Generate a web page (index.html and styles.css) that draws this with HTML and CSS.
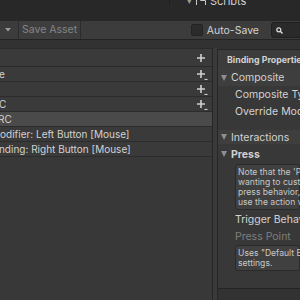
FILE: index.html
```html
<!DOCTYPE html>
<html lang="en">
  <head>
    <meta charset="UTF-8" />
    <title>Input Actions</title>
    <link rel="stylesheet" href="styles.css">
  </head>
  <body>
    <div class="tabstrip">
      <div class="project-row">
        <span class="tree-arrow">&#9662;</span>
        <svg class="folder" width="10" height="9" viewBox="0 0 10 9"><path d="M0.5 1.5h3l1 1h5v6h-9z" fill="none" stroke="#c8c8c8"/></svg>
        <span>Scripts</span>
      </div>
    </div>

    <div class="toolbar">
      <div class="menu-btn">
        <svg width="6" height="4" viewBox="0 0 6 4"><path d="M0 0h6l-3 3.5z" fill="#9a9a9a"/></svg>
      </div>
      <div class="save-btn">Save Asset</div>
      <div class="spacer"></div>
      <label class="autosave"><span class="check"></span>Auto-Save</label>
      <div class="search">
        <svg width="7" height="7" viewBox="0 0 7 7"><circle cx="2.8" cy="2.8" r="2" fill="none" stroke="#e0e0e0" stroke-width="1.2"/><path d="M4.3 4.3l2.2 2.2" stroke="#e0e0e0" stroke-width="1.4"/></svg>
      </div>
    </div>

    <div class="main">
      <div class="actions">
        <div class="col-header">
          <svg class="plus" width="11" height="10" viewBox="0 0 11 10"><path d="M4 0v8M0 4h8" stroke="#d0d0d0" stroke-width="1.6"/></svg>
        </div>
        <div class="row"><span class="label" style="margin-left: -1px">e</span>
          <svg class="plus" width="11" height="10" viewBox="0 0 11 10"><path d="M4 0v8M0 4h8" stroke="#d0d0d0" stroke-width="1.6"/><path d="M7.5 9.5h3" stroke="#d0d0d0" stroke-width="1.2"/></svg>
        </div>
        <div class="row"><span class="label"></span>
          <svg class="plus" width="11" height="10" viewBox="0 0 11 10"><path d="M4 0v8M0 4h8" stroke="#d0d0d0" stroke-width="1.6"/><path d="M7.5 9.5h3" stroke="#d0d0d0" stroke-width="1.2"/></svg>
        </div>
        <div class="row"><span class="label" style="margin-left: -1px">C</span>
          <svg class="plus" width="11" height="10" viewBox="0 0 11 10"><path d="M4 0v8M0 4h8" stroke="#d0d0d0" stroke-width="1.6"/><path d="M7.5 9.5h3" stroke="#d0d0d0" stroke-width="1.2"/></svg>
        </div>
        <div class="row selected"><span class="label" style="margin-left: -2px">RC</span></div>
        <div class="row"><span class="label" style="margin-left: -9px">Modifier: Left Button [Mouse]</span></div>
        <div class="row"><span class="label" style="margin-left: -10px">Binding: Right Button [Mouse]</span></div>
      </div>

      <div class="gutter"></div>

      <div class="props">
        <div class="props-header">Binding Properties</div>
        <div class="foldout-band"><span class="tri"></span>Composite</div>
        <div class="field">Composite Type</div>
        <div class="field">Override Modifiers Need To Be Pressed First</div>
        <div class="foldout-band interactions"><span class="tri"></span>Interactions</div>
        <div class="foldout bold"><span class="tri"></span>Press</div>
        <div class="helpbox">
          Note that the 'Press' interaction is only necessary when<br>
          wanting to customize button press behavior. For default<br>
          press behavior, simply set the action type to 'Button' and<br>
          use the action without interactions added to it.
        </div>
        <div class="field trigger">Trigger Behavior</div>
        <div class="field disabled">Press Point</div>
        <div class="helpbox">
          Uses "Default Button Press Point" set in project-wide input<br>
          settings.
        </div>
        <div class="props-footer"></div>
      </div>
    </div>
  </body>
</html>
```

FILE: styles.css
```css
body {
  margin: 0;
  width: 300px;
  height: 300px;
  overflow: hidden;
  background-color: #383838;
  font-family: Inter, "Noto Sans", sans-serif;
  font-size: 10px;
  color: #d2d2d2;
}
.tabstrip {
  height: 21px;
  background-color: #282828;
}
.project-row {
  margin-left: 169px;
  height: 5px;
  overflow: hidden;
  border-left: 1px solid #1e1e1e;
  display: flex;
  align-items: flex-end;
  gap: 4px;
  padding-left: 17px;
  line-height: 12px;
  font-size: 11px;
}
.project-row > * {
  margin-bottom: -2px;
}
.tree-arrow {
  color: #9a9a9a;
  font-size: 9px;
}
.toolbar {
  height: 18px;
  background-color: #3c3c3c;
  border-bottom: 1px solid #232323;
  display: flex;
  align-items: center;
}
.menu-btn {
  width: 19px;
  height: 18px;
  border-right: 1px solid #2c2c2c;
  display: flex;
  align-items: center;
  padding-left: 5px;
  box-sizing: border-box;
}
.save-btn {
  width: 62px;
  height: 18px;
  line-height: 18px;
  padding-left: 3px;
  box-sizing: border-box;
  background-color: #3e3e3e;
  border-right: 1px solid #2c2c2c;
  color: #858585;
  font-size: 10.5px;
}
.spacer {
  flex: 1;
}
.autosave {
  display: flex;
  align-items: center;
  gap: 4px;
  margin-right: 12px;
  font-size: 10.5px;
}
.check {
  width: 10px;
  height: 10px;
  background-color: #2b2b2b;
  border: 1px solid #232323;
  border-radius: 2px;
}
.search {
  width: 34px;
  height: 14px;
  margin-right: -11px;
  background-color: #2a2a2a;
  border: 1px solid #1f1f1f;
  border-radius: 3px;
  display: flex;
  align-items: center;
  padding-left: 4px;
}
.main {
  display: flex;
  height: 260px;
  background-color: #323232;
}
.actions {
  width: 212px;
  margin-top: 8px;
  border-right: 1px solid #262626;
  background-color: #383838;
  overflow: hidden;
}
.col-header {
  height: 17px;
  border-top: 1px solid #2a2a2a;
  border-bottom: 1px solid #2a2a2a;
  background-color: #3a3a3a;
  display: flex;
  align-items: center;
  justify-content: flex-end;
}
.row {
  height: 14px;
  border-bottom: 1px solid #2c2c2c;
  background-color: #3a3a3a;
  display: flex;
  align-items: center;
  white-space: nowrap;
}
.row.selected {
  background-color: #4a4a4a;
}
.label {
  flex: 1;
}
.plus {
  margin-right: 4px;
  margin-top: 2px;
}
.gutter {
  width: 4px;
  margin-top: 8px;
  background-color: #3a3a3a;
}
.props {
  flex: 1;
  margin-top: 9px;
  border-left: 1px solid #262626;
  background-color: #383838;
  white-space: nowrap;
  overflow: hidden;
}
.props-header {
  height: 19px;
  line-height: 19px;
  padding-left: 9px;
  background-color: #3c3c3c;
  border-top: 1px solid #262626;
  font-weight: 700;
  font-size: 8.8px;
}
.foldout-band,
.foldout {
  height: 17px;
  display: flex;
  align-items: center;
  gap: 4px;
  padding-left: 3px;
  font-size: 10.5px;
}
.foldout-band {
  background-color: #3e3e3e;
}
.foldout-band.interactions {
  margin-top: 10px;
  height: 14px;
}
.foldout.bold {
  font-weight: 700;
  height: 20px;
}
.tri {
  width: 0;
  height: 0;
  border-left: 3.5px solid transparent;
  border-right: 3.5px solid transparent;
  border-top: 6px solid #8e8e8e;
}
.field {
  height: 17px;
  line-height: 17px;
  padding-left: 17px;
  font-size: 10.5px;
}
.field.trigger {
  margin-top: 1px;
}
.field.disabled {
  color: #7e7e7e;
}
.helpbox {
  margin-left: 17px;
  padding: 2px 3px 2px 2px;
  background-color: #404040;
  border: 1px solid #2a2a2a;
  border-radius: 3px;
  font-size: 8.6px;
  line-height: 10px;
  color: #c8c8c8;
}
.props-footer {
  margin-top: 17px;
  height: 20px;
  border-top: 1px solid #232323;
  background-color: #323232;
}
```
